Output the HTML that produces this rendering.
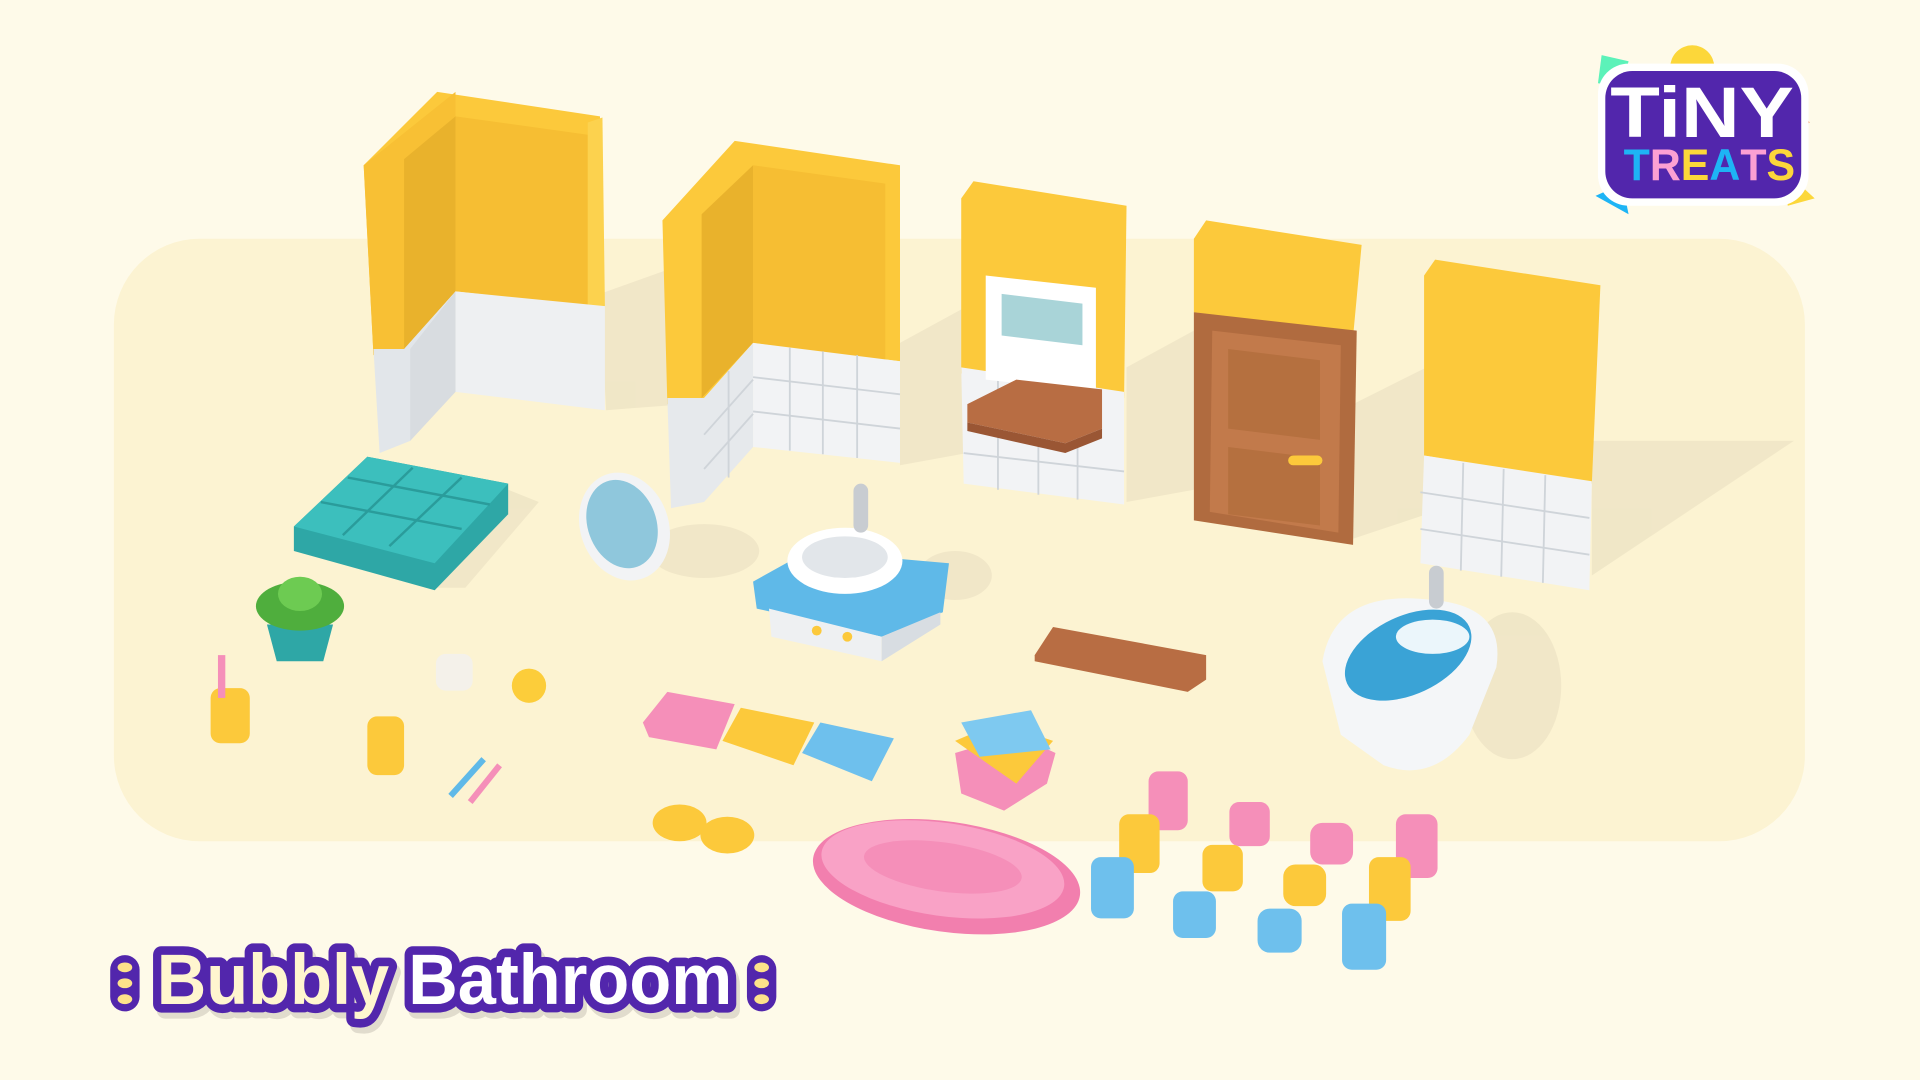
<!DOCTYPE html>
<html><head><meta charset="utf-8"><style>
html,body{margin:0;padding:0;background:#fefae9;overflow:hidden}
svg{display:block}
</style></head><body>
<svg width="1920" height="1080" viewBox="0 0 1568 882" xmlns="http://www.w3.org/2000/svg">
<rect width="1568" height="882" fill="#fefae9"/>
<rect x="93" y="195" width="1381" height="492" rx="70" fill="#fcf3d2"/>
<!-- shadows -->
<g fill="#efe6c6" opacity="0.9">
<polygon points="490,240 560,215 560,330 495,335"/>
<polygon points="735,280 790,250 790,370 735,380"/>
<polygon points="920,300 975,270 975,400 920,410"/>
<polygon points="1105,330 1165,300 1165,420 1105,440"/>
<polygon points="1300,360 1465,360 1300,470"/>
<ellipse cx="575" cy="450" rx="45" ry="22"/>
<ellipse cx="780" cy="470" rx="30" ry="20"/>
<ellipse cx="1235" cy="560" rx="40" ry="60"/>
<polygon points="415,400 440,410 380,480 350,480"/>
</g>
<!-- wall 1 -->
<polygon points="297,135 357,75 490,95 490,250 372,235 330,285 305,290" fill="#fcc93b"/>
<polygon points="297,135 372,75 372,238 330,285 305,290" fill="#f8c034"/>
<polygon points="330,130 372,95 372,238 330,285" fill="#e9b22c"/>
<polygon points="372,95 480,110 480,250 372,238" fill="#f6be33"/>
<polygon points="480,100 492,96 494,250 480,252" fill="#fcd24e"/>
<polygon points="305,285 330,285 372,238 372,310 335,360 310,370" fill="#e2e6ea"/>
<polygon points="372,238 494,250 494,335 372,320" fill="#eef0f2"/>
<polygon points="372,238 372,320 335,360 335,285" fill="#d8dce0"/>
<!-- wall 2 -->
<polygon points="541,180 600,115 735,135 735,295 615,280 575,325 545,330" fill="#fcc93b"/>
<polygon points="573,175 615,135 615,280 573,325" fill="#e9b22c"/>
<polygon points="615,135 723,150 723,295 615,280" fill="#f6be33"/>
<polygon points="545,325 575,325 615,280 615,365 575,410 548,415" fill="#e6e9ec"/>
<polygon points="615,280 735,295 735,378 615,365" fill="#f2f3f5"/>
<g stroke="#cfd4d9" stroke-width="1.5" fill="none">
<line x1="615" y1="308" x2="735" y2="322"/><line x1="615" y1="336" x2="735" y2="350"/>
<line x1="645" y1="284" x2="645" y2="368"/><line x1="672" y1="287" x2="672" y2="371"/><line x1="700" y1="290" x2="700" y2="374"/>
<line x1="575" y1="355" x2="615" y2="310"/><line x1="575" y1="383" x2="615" y2="338"/><line x1="595" y1="303" x2="595" y2="390"/>
</g>
<!-- wall 3 window -->
<polygon points="785,162 795,148 920,168 918,325 785,305" fill="#fcc93b"/>
<polygon points="785,300 918,320 918,412 787,395" fill="#f2f3f5"/>
<g stroke="#cfd4d9" stroke-width="1.5"><line x1="787" y1="370" x2="918" y2="385"/><line x1="815" y1="310" x2="815" y2="400"/><line x1="848" y1="313" x2="848" y2="404"/><line x1="880" y1="316" x2="880" y2="408"/></g>
<polygon points="805,225 895,235 895,320 805,310" fill="#ffffff"/>
<polygon points="818,240 884,248 884,282 818,274" fill="#a9d4d8"/>
<polygon points="790,330 830,310 900,318 900,350 870,362 790,345" fill="#b86d43"/>
<polygon points="790,345 870,362 900,350 900,358 870,370 790,352" fill="#9a5634"/>
<!-- wall 4 door -->
<polygon points="975,195 985,180 1112,200 1105,275 975,255" fill="#fcc93b"/>
<polygon points="975,255 1108,270 1105,445 975,425" fill="#b06b3f"/>
<polygon points="990,270 1095,282 1093,435 988,418" fill="#c27a4b"/>
<rect x="1003" y="285" width="75" height="65" fill="#b5703f" transform="skewY(7)" transform-origin="1003 285"/>
<rect x="1003" y="365" width="75" height="55" fill="#b5703f" transform="skewY(7)" transform-origin="1003 365"/>
<rect x="1052" y="372" width="28" height="8" rx="4" fill="#fcc93b"/>
<!-- wall 5 -->
<polygon points="1163,225 1172,212 1307,233 1300,395 1163,372" fill="#fcc93b"/>
<polygon points="1163,372 1300,393 1298,482 1160,460" fill="#f2f3f5"/>
<g stroke="#cfd4d9" stroke-width="1.5"><line x1="1160" y1="402" x2="1298" y2="423"/><line x1="1160" y1="432" x2="1298" y2="453"/><line x1="1195" y1="378" x2="1193" y2="466"/><line x1="1228" y1="383" x2="1226" y2="471"/><line x1="1262" y1="388" x2="1260" y2="476"/></g>
<!-- teal mat -->
<polygon points="240,430 300,373 415,395 415,420 355,482 240,450" fill="#2ea7a6"/>
<polygon points="240,430 300,373 415,395 355,460" fill="#3cbfbd"/>
<g stroke="#2a9c9b" stroke-width="2"><line x1="262" y1="410" x2="377" y2="432"/><line x1="284" y1="390" x2="400" y2="412"/><line x1="280" y1="437" x2="337" y2="382"/><line x1="318" y1="446" x2="377" y2="390"/></g>
<!-- mirror -->
<ellipse cx="510" cy="430" rx="36" ry="45" fill="#f2f3f5" transform="rotate(-20 510 430)"/>
<ellipse cx="508" cy="428" rx="28" ry="37" fill="#8fc7dc" transform="rotate(-20 508 428)"/>
<!-- sink -->
<polygon points="615,475 660,450 775,460 770,500 720,520 618,497" fill="#5fb9e8"/>
<polygon points="628,497 720,520 720,540 630,520" fill="#eef0f2"/>
<polygon points="720,520 768,500 768,510 720,540" fill="#d8dde2"/>
<ellipse cx="690" cy="458" rx="47" ry="27" fill="#ffffff"/>
<ellipse cx="690" cy="455" rx="35" ry="17" fill="#e2e6ea"/>
<rect x="697" y="395" width="12" height="40" rx="6" fill="#c8ccd1"/>
<circle cx="667" cy="515" r="4" fill="#fcc93b"/><circle cx="692" cy="520" r="4" fill="#fcc93b"/>
<!-- plant -->
<path d="M218,510 L272,510 L264,540 L226,540Z" fill="#2ea7a6"/>
<ellipse cx="245" cy="495" rx="36" ry="20" fill="#4fae3d"/>
<ellipse cx="245" cy="485" rx="18" ry="14" fill="#6dcb52"/>
<!-- cups -->
<rect x="172" y="562" width="32" height="45" rx="8" fill="#fcc93b"/>
<rect x="178" y="535" width="6" height="35" fill="#f58fb9"/>
<rect x="300" y="585" width="30" height="48" rx="8" fill="#fcc93b"/>
<rect x="356" y="534" width="30" height="30" rx="8" fill="#f4f1ea"/>
<circle cx="432" cy="560" r="14" fill="#fccd3a"/>
<path d="M368,650 L395,620" stroke="#5fb9e8" stroke-width="5"/>
<path d="M384,655 L408,625" stroke="#f58fb9" stroke-width="5"/>
<!-- towels -->
<polygon points="525,590 545,565 600,575 585,612 530,602" fill="#f58fb9"/>
<polygon points="590,605 605,578 665,590 648,625" fill="#fcc93b"/>
<polygon points="655,615 670,590 730,603 712,638" fill="#6ec0ed"/>
<polygon points="780,615 830,600 862,615 855,640 820,662 785,648" fill="#f58fb9"/>
<polygon points="780,605 815,590 860,605 830,640" fill="#fcc93b"/>
<polygon points="785,590 842,580 858,612 800,618" fill="#7ec9f0"/>
<!-- slippers -->
<ellipse cx="555" cy="672" rx="22" ry="15" fill="#fcc93b"/><ellipse cx="594" cy="682" rx="22" ry="15" fill="#fcc93b"/>
<!-- bench -->
<polygon points="845,535 860,512 985,535 985,555 970,565 845,540" fill="#b86d43"/>
<!-- rug -->
<ellipse cx="773" cy="716" rx="110" ry="45" fill="#f27fae" transform="rotate(8 773 716)"/>
<ellipse cx="770" cy="710" rx="100" ry="38" fill="#f9a2c6" transform="rotate(8 770 710)"/>
<ellipse cx="770" cy="708" rx="65" ry="20" fill="#f58fb9" transform="rotate(8 770 708)"/>
<!-- bathtub -->
<path d="M1080,540 Q1090,480 1170,490 Q1230,495 1222,545 L1200,600 Q1170,640 1130,625 L1095,600Z" fill="#f4f6f8"/>
<ellipse cx="1150" cy="535" rx="55" ry="32" fill="#3aa3d6" transform="rotate(-25 1150 535)"/>
<ellipse cx="1170" cy="520" rx="30" ry="14" fill="#ffffff" opacity="0.9"/>
<rect x="1167" y="462" width="12" height="35" rx="6" fill="#c8ccd1"/>
<!-- bottles -->
<g>
<rect x="938" y="630" width="32" height="48" rx="8" fill="#f58fb9"/>
<rect x="914" y="665" width="33" height="48" rx="8" fill="#fcc93b"/>
<rect x="891" y="700" width="35" height="50" rx="8" fill="#6ec0ed"/>
<rect x="1004" y="655" width="33" height="36" rx="8" fill="#f58fb9"/>
<rect x="982" y="690" width="33" height="38" rx="8" fill="#fcc93b"/>
<rect x="958" y="728" width="35" height="38" rx="8" fill="#6ec0ed"/>
<rect x="1070" y="672" width="35" height="34" rx="10" fill="#f58fb9"/>
<rect x="1048" y="706" width="35" height="34" rx="10" fill="#fcc93b"/>
<rect x="1027" y="742" width="36" height="36" rx="10" fill="#6ec0ed"/>
<rect x="1140" y="665" width="34" height="52" rx="8" fill="#f58fb9"/>
<rect x="1118" y="700" width="34" height="52" rx="8" fill="#fcc93b"/>
<rect x="1096" y="738" width="36" height="54" rx="8" fill="#6ec0ed"/>
</g>
<!-- logo -->
<polygon points="1308,45 1330,50 1325,70 1305,68" fill="#5cf2b9"/>
<circle cx="1382" cy="55" r="18" fill="#fcd73a"/>
<polygon points="1462,80 1478,100 1462,110" fill="#fca070"/>
<polygon points="1303,160 1325,150 1330,175" fill="#1eb4f5"/>
<polygon points="1458,140 1482,162 1460,168" fill="#fcd73a"/>
<rect x="1305" y="52" width="172" height="116" rx="25" fill="#ffffff"/>
<rect x="1311" y="58" width="160" height="104" rx="22" fill="#5226ac"/>
<text x="1390" y="112" text-anchor="middle" font-family="Liberation Sans, sans-serif" font-weight="bold" font-size="58" textLength="150" lengthAdjust="spacingAndGlyphs" fill="#fff">TiNY</text>
<text x="1396" y="147" text-anchor="middle" font-family="Liberation Sans, sans-serif" font-weight="bold" font-size="36" textLength="140" lengthAdjust="spacingAndGlyphs"><tspan fill="#1eb4f5">T</tspan><tspan fill="#fca0d3">R</tspan><tspan fill="#fcd73a">E</tspan><tspan fill="#1eb4f5">A</tspan><tspan fill="#fca0d3">T</tspan><tspan fill="#fcd73a">S</tspan></text>
<!-- title -->
<g fill="#5226ac"><rect x="90" y="780" width="24" height="46" rx="12"/><rect x="610" y="780" width="24" height="46" rx="12"/></g>
<g fill="#fde28a"><ellipse cx="102" cy="790" rx="6" ry="4"/><ellipse cx="102" cy="803" rx="6" ry="4"/><ellipse cx="102" cy="816" rx="6" ry="4"/><ellipse cx="622" cy="790" rx="6" ry="4"/><ellipse cx="622" cy="803" rx="6" ry="4"/><ellipse cx="622" cy="816" rx="6" ry="4"/></g>
<g font-family="Liberation Sans, sans-serif" font-weight="bold" font-size="58">
<text x="131" y="825" textLength="470" lengthAdjust="spacingAndGlyphs" fill="#e1dccd" stroke="#e1dccd" stroke-width="14" stroke-linejoin="round">Bubbly Bathroom</text>
<text x="128" y="820" textLength="470" lengthAdjust="spacingAndGlyphs" fill="#5226ac" stroke="#5226ac" stroke-width="14" stroke-linejoin="round">Bubbly Bathroom</text>
<text x="128" y="820" textLength="470" lengthAdjust="spacingAndGlyphs" fill="#fff6cf">Bubbly <tspan fill="#ffffff">Bathroom</tspan></text>
</g>
</svg>
</body></html>
